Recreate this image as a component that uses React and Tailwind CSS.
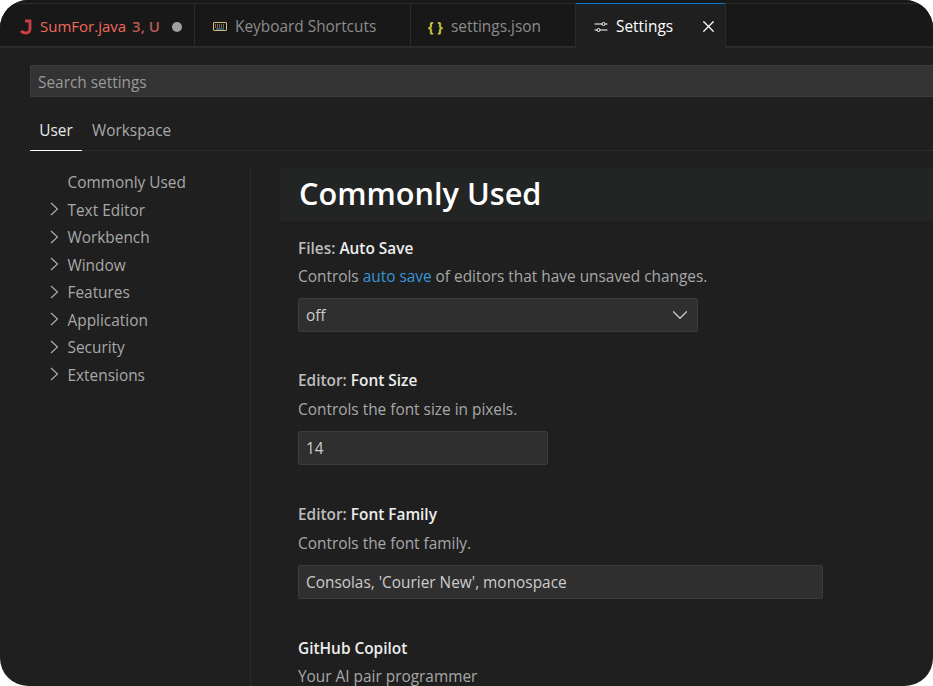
import React from "react";
import { ChevronDown, X } from "lucide-react";

const treeItems = ["Text Editor", "Workbench", "Window", "Features", "Application", "Security", "Extensions"];

function SettingsIcon() {
  return (
    <svg width="16" height="16" viewBox="0 0 16 16" fill="none" stroke="currentColor" strokeWidth="1">
      <path d="M1.5 5H9M12 5h2.5M1.5 11H4M7 11h7.5" />
      <circle cx="10.5" cy="5" r="1.5" />
      <circle cx="5.5" cy="11" r="1.5" />
    </svg>
  );
}

function KeyboardIcon() {
  return (
    <svg width="16" height="16" viewBox="0 0 16 16" fill="none" stroke="#d7ba7d">
      <rect x="1.5" y="3.5" width="13" height="8" rx="0.5" />
      <path d="M3 6h10M3 8h10" strokeDasharray="1 1" />
      <path d="M4 10h8" stroke="#519aba" />
    </svg>
  );
}

function JavaIcon() {
  return (
    <svg width="12" height="16" viewBox="0 0 12 16" fill="none" stroke="#cc3e44" strokeWidth="2.8">
      <path d="M5 2h5v7.5C10 13 8 14 5.5 14 3.5 14 2 13.2 1 12" />
    </svg>
  );
}

function TreeChevron() {
  return (
    <svg width="9" height="14" viewBox="0 0 9 14" fill="none" stroke="#b0b0b0" strokeWidth="1.1" className="-mt-[2px]">
      <path d="M1 1l6.5 6L1 13" />
    </svg>
  );
}

function Tab({ children, className }) {
  return (
    <div className={`flex h-[43px] shrink-0 items-center border-r border-[#2b2b2b] pt-[2px] ${className}`}>{children}</div>
  );
}

function Setting({ prefix, name, desc, children, className, loose }) {
  return (
    <div className={className}>
      <div className="text-[15.4px] leading-[20px] font-semibold text-[#bdbdbd]">
        {prefix && <span>{prefix}: </span>}
        <span className="text-[#eeeeee]">{name}</span>
      </div>
      <p className={`${loose ? "mt-[9px]" : "mt-[8px]"} text-[15.4px] leading-[20px] text-[#a8a8a8]`}>{desc}</p>
      {children}
    </div>
  );
}

function Field({ value, width, children }) {
  return (
    <div
      className={`mt-[11px] flex h-[34px] items-center justify-between rounded-[2px] border border-[#3c3c3c] bg-[#2f2f2f] pl-[7px] pr-[9px] pt-[2px] text-[15.4px] text-[#cccccc] ${width}`}
    >
      <span>{value}</span>
      {children}
    </div>
  );
}

export default function App() {
  return (
    <div className="h-[686px] w-[933px] overflow-hidden bg-white" style={{ fontFamily: '"Open Sans", "Noto Sans", sans-serif' }}>
      <div className="flex h-full flex-col overflow-hidden rounded-[28px] bg-[#1f1f1f]">
        {/* tab bar */}
        <div className="h-[48px] shrink-0 border-b-2 border-[#2b2b2b] bg-[#181818] pt-[3px]">
          <div className="flex border-t border-[#2b2b2b]">
            <Tab className="w-[195px] pl-[20px] text-[15px]">
              <span className="w-[20px]"><JavaIcon /></span>
              <span className="text-[#f0695d]">SumFor.java</span>
              <span className="ml-[6px] font-semibold text-[#b85a52]">3, U</span>
              <span className="ml-[12px] h-[10px] w-[10px] rounded-full bg-[#a0a0a0]" />
            </Tab>
            <Tab className="w-[216px] pl-[17px] text-[15.4px] text-[#8c8c8c]">
              <KeyboardIcon />
              <span className="ml-[7px]">Keyboard Shortcuts</span>
            </Tab>
            <Tab className="w-[165px] pl-[17px] text-[15.4px] text-[#8c8c8c]">
              <span className="w-[23px] text-[14px] font-bold text-[#cbcb41]">{"{ }"}</span>
              <span>settings.json</span>
            </Tab>
            <div className="relative -mb-[2px] flex h-[45px] w-[150px] shrink-0 items-center border-r border-[#2b2b2b] bg-[#1f1f1f] pl-[17px] text-[15.4px] text-white">
              <div className="absolute -top-px left-0 h-px w-full bg-[#0078d4]" />
              <SettingsIcon />
              <span className="ml-[7px]">Settings</span>
              <X className="ml-[26px]" size={19} strokeWidth={1.5} />
            </div>
          </div>
        </div>

        <div className="flex min-h-0 flex-1 flex-col pl-[30px]">
          {/* search */}
          <div className="mt-[17px] flex h-[32px] shrink-0 items-center rounded-l-[2px] border border-r-0 border-[#3c3c3c] bg-[#333333] pl-[7px] pt-[3px] text-[15.4px] text-[#9a9a9a]">
            Search settings
          </div>

          {/* scope tabs */}
          <div className="mt-[17px] flex h-[37px] shrink-0 border-b border-[#2b2b2b] text-[15.4px]">
            <div className="h-[37px] w-[52px] border-b border-white pt-[5px] text-center text-[#e7e7e7]">User</div>
            <div className="ml-[10px] pt-[5px] text-[#a8a8a8]">Workspace</div>
          </div>

          <div className="flex min-h-0 flex-1 pt-[17px]">
            {/* tree */}
            <nav className="w-[221px] shrink-0 border-r border-[#2b2b2b] pt-[0.5px] text-[15.4px] text-[#a8a8a8]">
              <div className="flex h-[28px] items-center pl-[37.5px]">Commonly Used</div>
              {treeItems.map((item) => (
                <div key={item} className="flex h-[27.5px] items-center pl-[20px]">
                  <TreeChevron />
                  <span className="ml-[8.5px]">{item}</span>
                </div>
              ))}
            </nav>

            {/* content */}
            <main className="min-w-0 flex-1 overflow-hidden pl-[29px]">
              <h1 className="flex h-[53px] items-center bg-[#232525] pb-[3px] pl-[19px] text-[30.7px] font-semibold text-white">
                Commonly Used
              </h1>
              <div className="pl-[18px]">
                <Setting prefix="Files" name="Auto Save" className="mt-[18px]"
                  desc={<>Controls <span className="text-[#3794d8]">auto save</span> of editors that have unsaved changes.</>}>
                  <Field value="off" width="w-[400px]">
                    <ChevronDown size={26} strokeWidth={1.1} className="-mr-[5px] -mt-[2px] text-[#cccccc]" />
                  </Field>
                </Setting>
                <Setting prefix="Editor" name="Font Size" desc="Controls the font size in pixels." className="mt-[39px]" loose>
                  <Field value="14" width="w-[250px]" />
                </Setting>
                <Setting prefix="Editor" name="Font Family" desc="Controls the font family." className="mt-[40px]" loose>
                  <Field value="Consolas, 'Courier New', monospace" width="w-[525px]" />
                </Setting>
                <Setting name="GitHub Copilot" desc="Your AI pair programmer" className="mt-[40px]" />
              </div>
            </main>
          </div>
        </div>
      </div>
    </div>
  );
}
